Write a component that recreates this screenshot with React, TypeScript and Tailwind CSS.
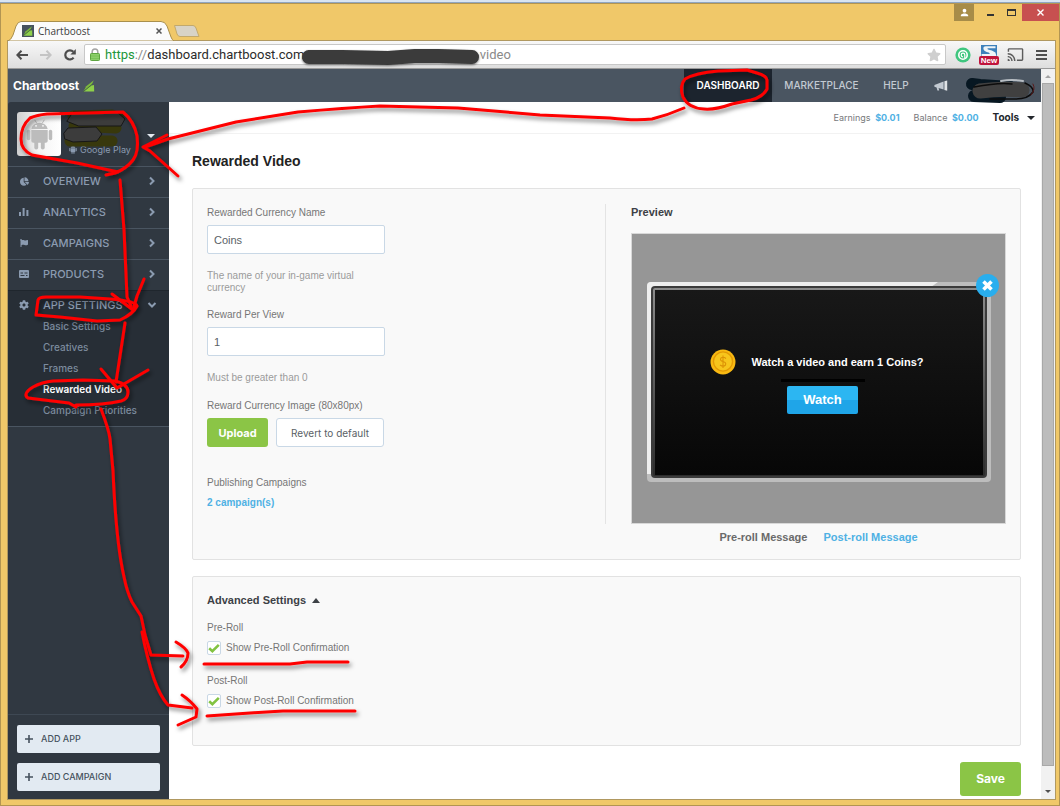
import { useState, type ReactNode } from "react";
import { FaChartPie, FaCog, FaFlag, FaStar } from "react-icons/fa";
import { MdCast, MdPerson } from "react-icons/md";

const brand = "font-['Inter',sans-serif]";

function LeafLogo({ className }: { className: string }) {
  return (
    <svg viewBox="0 0 12 12" className={className} aria-hidden="true">
      <path d="M0.4 11.6 L3.2 6.2 L10.8 0.2 L8.6 5.2 Z" fill="#7cb93e" />
      <path d="M0.4 11.6 L8.6 5.4 L11 5 L11.2 11.6 Z" fill="#8ed04a" />
      <path d="M0.4 11.6 L9.4 4" stroke="#3f5a3c" strokeWidth="0.8" />
    </svg>
  );
}

function AndroidIcon({ className }: { className: string }) {
  return (
    <svg viewBox="0 0 28 32" className={className} fill="currentColor" aria-hidden="true">
      <path d="M5.5 10.2 A8.6 7.6 0 0 1 22.5 10.2 Z" />
      <path d="M9 0.8 L11 4 M19 0.8 L17 4" stroke="currentColor" strokeWidth="1" />
      <circle cx="10.4" cy="7" r="0.9" fill="white" />
      <circle cx="17.6" cy="7" r="0.9" fill="white" />
      <path d="M5.5 11.4 H22.5 V22.5 Q22.5 24.5 20.5 24.5 H7.5 Q5.5 24.5 5.5 22.5 Z" />
      <rect x="0.8" y="11" width="3.6" height="11" rx="1.8" />
      <rect x="23.6" y="11" width="3.6" height="11" rx="1.8" />
      <rect x="8.6" y="22" width="4" height="9.5" rx="2" />
      <rect x="15.4" y="22" width="4" height="9.5" rx="2" />
    </svg>
  );
}

function MegaphoneIcon() {
  return (
    <svg viewBox="0 0 14 12" className="h-3 w-[14px]" aria-hidden="true">
      <path d="M9.6 1.6 V9.6 L4.6 8 L5.2 10.6 H3.4 L2.6 7.6 L0.4 6.8 V4.9 Z" fill="#c3cad2" />
      <path d="M10.4 1.2 L13.2 0.6 V10.8 L10.4 10 Z" fill="#e0e3e6" />
    </svg>
  );
}

function BarsIcon() {
  return (
    <svg viewBox="0 0 10 10" className="size-[10px]" fill="currentColor" aria-hidden="true">
      <path d="M0 5h2v4H0zM3.6 1h2v8h-2zM7.4 3h2v6h-2z" />
    </svg>
  );
}

function ProductIcon() {
  return (
    <svg viewBox="0 0 10 10" className="size-[10px]" aria-hidden="true">
      <rect x="0" y="1" width="10" height="8" rx="1" fill="currentColor" />
      <path d="M1.5 4h2.5M5.5 4h3M1.5 6.5h4M7 6.5h1.5" stroke="#303841" strokeWidth="1" />
    </svg>
  );
}

function Chevron({ down }: { down?: boolean }) {
  return (
    <svg viewBox="0 0 10 10" className="size-[10px]" fill="none" stroke="currentColor" strokeWidth="2" aria-hidden="true">
      <path d={down ? "M1.5 3 L5 6.5 L8.5 3" : "M3 1.5 L6.5 5 L3 8.5"} />
    </svg>
  );
}

function TitleBar() {
  return (
    <div className="flex h-[37px] items-end justify-between pl-[7px]">
      <div className="flex h-full items-end">
        <div className="relative flex h-5 w-[166px] items-center pl-[14px] pr-[10px]">
          <svg viewBox="0 0 166 20" className="absolute inset-0 h-full w-full" preserveAspectRatio="none" aria-hidden="true">
            <path d="M0 20 Q3 19 5 14 L8 5 Q10 0.5 13 0.5 H153 Q157 0.5 159 5 L163 16 Q164 19 166 20 Z" fill="#fbfbfb" stroke="#a98f4c" />
          </svg>
          <span className="relative flex size-3 items-center justify-center bg-[#46525e]">
            <LeafLogo className="size-[10px]" />
          </span>
          <span className="relative ml-1 flex-1 font-['Open_Sans',sans-serif] text-[10px] text-[#3c3c3c]">Chartboost</span>
          <button aria-label="Close tab" className="relative flex size-[10px] items-center justify-center">
            <svg viewBox="0 0 6 6" className="size-[6px]" stroke="#555" strokeWidth="1.5" aria-hidden="true">
              <path d="M0.5 0.5 L5.5 5.5 M5.5 0.5 L0.5 5.5" />
            </svg>
          </button>
        </div>
        <button aria-label="New tab" className="mb-1">
          <svg viewBox="0 0 26 12" className="h-3 w-[26px]" aria-hidden="true">
            <path d="M0.5 0.5 H19 Q21 0.5 22 3 L25 11.5 H6 Q4 11.5 3 9 Z" fill="#d8d3c6" stroke="#c2a96c" />
          </svg>
        </button>
      </div>
      <div className="flex h-full items-start">
        <button aria-label="Profile" className="flex h-[17px] w-5 items-center justify-center bg-[#a78c48] text-white">
          <MdPerson size={11} />
        </button>
        <button aria-label="Minimize" className="flex h-[17px] w-8 items-center justify-center pt-[5px]">
          <span className="h-[2px] w-[7px] bg-[#333]" />
        </button>
        <button aria-label="Maximize" className="mr-[6px] flex h-[17px] w-[10px] items-center justify-center">
          <span className="h-[7px] w-[9px] border border-t-2 border-[#333]" />
        </button>
        <button aria-label="Close window" className="flex h-[17px] w-[37px] items-center justify-center bg-[#c75050]">
          <svg viewBox="0 0 7 7" className="size-[7px]" stroke="white" strokeWidth="1.4" aria-hidden="true">
            <path d="M0.5 0.5 L6.5 6.5 M6.5 0.5 L0.5 6.5" />
          </svg>
        </button>
      </div>
    </div>
  );
}

function Toolbar() {
  return (
    <div className="flex h-7 items-center gap-2 border-b border-[#9a9a9a] bg-linear-to-b from-[#f8f8f8] to-[#dedede] px-2">
      <button aria-label="Back">
        <svg viewBox="0 0 12 10" className="h-[10px] w-3" fill="none" stroke="#4d4d4d" strokeWidth="2" aria-hidden="true">
          <path d="M12 5 H1.5 M5.5 0.8 L1.3 5 L5.5 9.2" />
        </svg>
      </button>
      <button aria-label="Forward" className="ml-[4px]">
        <svg viewBox="0 0 12 10" className="h-[10px] w-3" fill="none" stroke="#c4c4c4" strokeWidth="2" aria-hidden="true">
          <path d="M0 5 H10.5 M6.5 0.8 L10.7 5 L6.5 9.2" />
        </svg>
      </button>
      <button aria-label="Reload" className="ml-[4px]">
        <svg viewBox="0 0 12 12" className="size-3" fill="none" stroke="#4d4d4d" strokeWidth="2.2" aria-hidden="true">
          <path d="M9.6 8.6 A4.6 4.6 0 1 1 9.3 2.8" />
          <path d="M11.8 0 V5.4 H6.4 Z" fill="#4d4d4d" stroke="none" />
        </svg>
      </button>
      <div className="flex h-[21px] flex-1 items-center rounded-[2px] border border-[#c8c8c8] bg-white pl-[5px] pr-1">
        <svg viewBox="0 0 10 13" className="h-[13px] w-[10px]" aria-hidden="true">
          <path d="M2.2 6 V3.8 A2.8 2.8 0 0 1 7.8 3.8 V6" fill="none" stroke="#a3a3a3" strokeWidth="1.5" />
          <rect x="0.5" y="5.5" width="9" height="7" rx="0.8" fill="#8ccf6a" stroke="#5ea540" />
          <path d="M1 8h8M1 10.5h8" stroke="#6fb84d" strokeWidth="0.6" />
        </svg>
        <span className="ml-[5px] flex flex-1 items-center whitespace-nowrap font-['Roboto',sans-serif] text-[13px] leading-5 text-[#2b2b2b]">
          <span className="text-[#22973c]">https</span>
          <span className="text-[#8a8a8a]">://</span>
          <span>dashboard.chartboost.com/</span>
          <span className="ml-[170px] text-[#8a8a8a]">video</span>
        </span>
        <FaStar className="size-[14px] text-[#cfcfcf]" />
      </div>
      <svg viewBox="0 0 16 16" className="ml-px size-4" fill="none" aria-hidden="true">
        <circle cx="8" cy="8" r="7.6" fill="#3fc67f" />
        <path d="M11 11 Q9.6 12.2 8 12.2 A4.2 4.2 0 1 1 12.2 8 Q12.2 10 11 11" stroke="white" strokeWidth="1.6" />
        <path d="M8 9.8 A1.8 1.8 0 1 1 9.8 8 V11" stroke="white" strokeWidth="1.2" />
      </svg>
      <span className="flex w-5 flex-col items-center">
        <svg viewBox="0 0 16 11" className="h-[11px] w-4" aria-hidden="true">
          <rect width="16" height="11" fill="#3d80bb" />
          <path d="M2.6 4.6 Q1.6 1.2 5 1.2 H14.5 V3.2 H7 Q5.6 3.6 7 4.6 Q11 5 14.4 7.6 L15.4 11 H0.6 V9 H8.4 Q9.4 8.2 7.6 7.4 Q3.4 6.8 2.6 4.6 Z" fill="#eef4f8" />
        </svg>
        <span className="flex h-[9px] w-5 items-center justify-center rounded-[2px] bg-[#c0143c] text-[8px] font-bold leading-[9px] text-white">New</span>
      </span>
      <MdCast className="size-[17px] text-[#5c5c5c]" />
      <button aria-label="Menu" className="ml-1 flex w-[11px] flex-col gap-[2px]">
        <span className="h-[2px] bg-[#4f4f4f]" />
        <span className="h-[2px] bg-[#4f4f4f]" />
        <span className="h-[2px] bg-[#4f4f4f]" />
      </button>
    </div>
  );
}

function SiteHeader() {
  return (
    <header className={`${brand} flex h-[33px] items-stretch justify-between bg-[#4a5561] pl-[5px] text-[10px] font-medium text-[#c3cad2]`}>
      <a href="#home" className="flex items-center gap-1 text-[12px] font-bold text-white">
        Chartboost
        <LeafLogo className="size-3" />
      </a>
      <nav className="flex items-stretch">
        <a href="#dashboard" className="flex w-[88px] items-center justify-center bg-[#1c242e] font-semibold text-white">DASHBOARD</a>
        <a href="#marketplace" className="flex w-[99px] items-center justify-center">MARKETPLACE</a>
        <a href="#help" className="flex w-[50px] items-center justify-center">HELP</a>
        <a href="#news" aria-label="News" className="flex w-10 items-center justify-center">
          <MegaphoneIcon />
        </a>
        <span className="w-20" />
      </nav>
    </header>
  );
}

function NavRow({ icon, label, open }: { icon: ReactNode; label: string; open?: boolean }) {
  return (
    <a href={`#${label.toLowerCase().replace(" ", "-")}`} className="flex h-[30px] items-center pb-[2px] pl-[11px] pr-3 text-[11px] font-medium text-[#8b9bb0]">
      <span className="flex w-[10px] justify-center">{icon}</span>
      <span className="ml-[14px] flex-1">{label}</span>
      <Chevron down={open} />
    </a>
  );
}

function Sidebar() {
  const subItems = ["Basic Settings", "Creatives", "Frames", "Rewarded Video", "Campaign Priorities"];
  return (
    <aside className={`${brand} flex w-[161px] shrink-0 flex-col rounded-tl-[3px] bg-[#303841]`}>
      <div className="flex h-16 items-center pb-1 pl-[9px] pr-[14px]">
        <span className="mt-[4px] flex size-11 items-center justify-center rounded-[3px] bg-linear-to-r from-[#d0d0d0] via-[#f4f4f4] to-white text-[#bcbcbc]">
          <AndroidIcon className="h-[31px] w-[27px]" />
        </span>
        <span className="ml-2 mt-[35px] flex flex-1 items-center gap-[3px] whitespace-nowrap text-[9px] text-[#8b9bb0]">
          <AndroidIcon className="h-[9px] w-2" />
          Google Play
        </span>
        <span className="mt-2 border-x-4 border-t-4 border-x-transparent border-t-[#e2e8ef]" />
      </div>
      <nav className="flex flex-col">
        <div className="border-t border-[#4a5561]"><NavRow icon={<FaChartPie size={9} />} label="OVERVIEW" /></div>
        <div className="border-t border-[#4a5561]"><NavRow icon={<BarsIcon />} label="ANALYTICS" /></div>
        <div className="border-t border-[#4a5561]"><NavRow icon={<FaFlag size={8} />} label="CAMPAIGNS" /></div>
        <div className="border-t border-[#4a5561]"><NavRow icon={<ProductIcon />} label="PRODUCTS" /></div>
        <div className="border-y border-b-[#4a5561] border-t-[#1f262d] bg-[#272e36] pb-[5px]">
          <NavRow icon={<FaCog size={10} />} label="APP SETTINGS" open />
          <ul className="-mt-[5px]">
            {subItems.map((item) => (
              <li key={item} className="flex h-[21px] items-center whitespace-nowrap pl-[35px] text-[10px]">
                <a
                  href={`#${item.toLowerCase().replace(" ", "-")}`}
                  className={item === "Rewarded Video" ? "font-semibold text-white" : "font-medium text-[#7c8b9e]"}
                >
                  {item}
                </a>
              </li>
            ))}
          </ul>
        </div>
      </nav>
      <div className="mt-auto flex flex-col gap-[10px] border-t border-[#3e4853] px-[9px] pb-2 pt-[10px]">
        {["ADD APP", "ADD CAMPAIGN"].map((label) => (
          <button key={label} className="flex h-7 items-center gap-2 rounded-[2px] bg-[#e2eaf2] pl-2 text-[9px] font-medium text-[#46525e]">
            <svg viewBox="0 0 8 8" className="size-2" stroke="currentColor" strokeWidth="1.6" aria-hidden="true">
              <path d="M4 0 V8 M0 4 H8" />
            </svg>
            {label}
          </button>
        ))}
      </div>
    </aside>
  );
}

function PreviewPanel({ currency, amount }: { currency: string; amount: string }) {
  return (
    <section className="w-[375px] shrink-0">
      <h2 className="mt-[2px] text-[11px] font-bold leading-3 text-[#3d4146]">Preview</h2>
      <div className="mt-[15px] border border-[#d8d8d8] bg-[#969696] pb-10 pl-[15px] pr-[14px] pt-12">
        <div className="relative h-[201px]">
          <svg viewBox="0 0 344 201" className="absolute inset-0 h-full w-full" preserveAspectRatio="none" aria-hidden="true">
            <defs>
              <linearGradient id="screen" x1="0" y1="0" x2="0" y2="1">
                <stop offset="0" stopColor="#181818" />
                <stop offset="1" stopColor="#070707" />
              </linearGradient>
              <linearGradient id="bezel" x1="0" y1="0" x2="0" y2="1">
                <stop offset="0" stopColor="#8c8c8c" />
                <stop offset="1" stopColor="#2c2c2c" />
              </linearGradient>
            </defs>
            <rect width="344" height="200" rx="4" fill="#bdbdbd" />
            <path d="M4 0 H291 L284 5 L5 192 L0 192 V4 Q0 0 4 0 Z" fill="#eeeeee" />
            <rect x="4" y="4" width="336" height="192" rx="4" fill="#3b3b3b" />
            <rect x="6" y="6" width="332" height="188" rx="2" fill="url(#bezel)" />
            <rect x="8" y="8" width="328" height="185" fill="url(#screen)" />
          </svg>
          <div className="relative flex h-full flex-col items-center pl-[7px] pt-[67px]">
            <div className="flex items-center gap-4 pr-3">
              <svg viewBox="0 0 26 26" className="size-[26px]" aria-hidden="true">
                <circle cx="13" cy="13" r="12.5" fill="#f9b912" />
                <circle cx="13" cy="12.5" r="9.6" fill="#f7c51c" stroke="#e39a05" strokeWidth="1.4" />
                <path d="M13 6.5 V19 M16 9.5 Q13 7.2 10.8 9.2 Q9.6 11.6 13 12.5 Q16.6 13.6 15.5 16 Q13.4 18.2 10 16" fill="none" stroke="#dc9206" strokeWidth="1.1" />
              </svg>
              <p className="whitespace-nowrap text-[11px] font-bold text-white">
                Watch a video and earn {amount} {currency}?
              </p>
            </div>
            <span className="mt-1 h-[3px] w-[84px] bg-black" />
            <button className="mt-1 h-7 w-[71px] rounded-[2px] bg-[linear-gradient(#2cb6f2_50%,#1fa5e8_50%)] text-[13px] font-bold text-white">Watch</button>
          </div>
          <button aria-label="Close preview" className="absolute -right-2 -top-2 size-[23px]">
            <svg viewBox="0 0 23 23" className="size-[23px]" aria-hidden="true">
              <circle cx="11.5" cy="11.5" r="11.5" fill="#29aeee" />
              <path d="M7.5 7.5 L15.5 15.5 M15.5 7.5 L7.5 15.5" stroke="white" strokeWidth="3.6" />
            </svg>
          </button>
        </div>
      </div>
      <div className="mt-[7px] flex justify-center gap-4 text-[11px] font-bold leading-3">
        <button className="text-[#6a6a6a]">Pre-roll Message</button>
        <button className="text-[#4fb1e4]">Post-roll Message</button>
      </div>
    </section>
  );
}

const inputStyle = "mt-[6px] block h-[29px] w-[178px] rounded-[2px] border border-[#c9d8e6] bg-white px-[6px] text-[11px] text-[#5a5f66]";

function CheckRow({ id, title, label }: { id: string; title: string; label: string }) {
  return (
    <div>
      <div className="text-[10px] leading-3 text-[#767676]">{title}</div>
      <label htmlFor={id} className="mt-[7px] flex items-center gap-[5px] text-[10px] leading-[14px] text-[#767676]">
        <span className="relative size-[14px]">
          <input id={id} type="checkbox" defaultChecked className="peer block size-[14px] appearance-none rounded-[2px] border border-[#c9d8e6] bg-white" />
          <svg viewBox="0 0 14 14" className="pointer-events-none invisible absolute inset-0 size-[14px] peer-checked:visible" fill="none" stroke="#82c341" strokeWidth="2.6" aria-hidden="true">
            <path d="M2.2 7.2 L5.4 10.2 L11.8 3.8" />
          </svg>
        </span>
        {label}
      </label>
    </div>
  );
}

function Annotations() {
  return (
    <svg viewBox="0 0 1060 806" className="pointer-events-none absolute left-0 top-0 h-[806px] w-[1060px]" fill="none" aria-hidden="true">
      <defs>
        <filter id="ink" filterUnits="userSpaceOnUse" x="0" y="0" width="1060" height="806">
          <feDropShadow dx="2" dy="3" stdDeviation="2" floodColor="#000" floodOpacity="0.5" />
        </filter>
        <filter id="soft" filterUnits="userSpaceOnUse" x="0" y="0" width="1060" height="806">
          <feDropShadow dx="0" dy="1" stdDeviation="1" floodColor="#000" floodOpacity="0.5" />
        </filter>
      </defs>
      <g strokeLinecap="round" strokeLinejoin="round">
        <path d="M309 55 H342 L388 56 L415 54 H438 L472 55" stroke="#3a3a3a" strokeWidth="14" filter="url(#soft)" />
        <path d="M73 114 L112 113 L119 116 M74 124 L116 126 M70 139 H112" stroke="#38380c" strokeWidth="11" />
        <path d="M67 119 L73 110 L117 110 L125 117 L121 124 L79 124 Z M64 131 L68 126 L96 125 L102 132 L97 139 L73 140 L65 137 Z" stroke="#171717" strokeWidth="1" fill="#3c3c3c" />
        <path d="M972 82 L980 83 L1010 85 M974 94 L1000 95" stroke="#071722" strokeWidth="12" />
        <path d="M980 89 Q1002 86 1022 88" stroke="#404040" strokeWidth="15" />
        <path d="M1001 79 Q1012 77 1023 79" stroke="#b7bdc3" strokeWidth="2" />
        <path d="M974 85 Q1000 80 1012 82 M1025 81 Q1034 85 1033 90 Q1028 97 1016 97 L990 97" stroke="#0c0c0c" strokeWidth="1.5" />
        <path d="M1033 82 Q1036 87 1031 93" stroke="#5b1b1b" strokeWidth="1" />
      </g>
      <g stroke="#fe0000" strokeWidth="3" strokeLinecap="round" strokeLinejoin="round" filter="url(#ink)">
        <path d="M683 95 Q679 84 685 77 Q695 71 718 69 L747 68 L757 71 Q767 74 767 78 L767 87 Q763 95 751 98 L732 102 Q715 108 704 107 Q688 106 683 95 Z" />
        <path d="M684 106 Q668 113 652 117 Q635 119 610 116 L540 113 L458 106 L380 104 Q345 106 298 110 L236 120 L168 137 L145 145" />
        <path d="M167 133 L143 145 L150 149 L178 174" />
        <path d="M47 112 L123 110 Q134 119 137 134 Q139 150 133 158 Q126 167 115 171 L106 173 L118 170 L77 161 L32 153 Q21 148 21 137 Q21 124 30 116 Q37 113 47 112 Z" />
        <path d="M120 178 L124 228 L127 295 L131 304" />
        <path d="M112 292 L133 308 L137 294 L144 277" />
        <path d="M36 313 L38 298 Q39 295 46 295 L80 295 L110 297 Q136 299 137 304 Q133 312 120 318 L97 319 L60 315 Z" />
        <path d="M125 321 L116 380" />
        <path d="M101 367 L117 386 L148 368" />
        <path d="M76 405 L69 401 L28 396 Q22 392 33 385 Q42 380 53 379 L83 378 L115 379 Q128 382 128 390 Q128 397 121 399 Q104 403 76 403 Z" />
        <path d="M101 407 Q109 428 110 437 L113 469 Q116 540 124 575 Q127 590 132 600 L141 614 L145 633 L151 653 L183 654" />
        <path d="M176 640 Q186 646 188 651 Q188 659 181 665" />
        <path d="M142 630 Q147 656 154 677 Q160 694 168 703 L192 706" />
        <path d="M182 693 Q191 699 197 707 L196 715 L178 723" />
        <path d="M204 662 H290 L307 660 H348" />
        <path d="M207 714 L250 711 L283 709 L355 709" />
      </g>
    </svg>
  );
}

export default function App() {
  const [currency, setCurrency] = useState("Coins");
  const [amount, setAmount] = useState("1");
  const [advancedOpen, setAdvancedOpen] = useState(true);

  return (
    <div className="relative flex min-h-screen flex-col border-t-2 border-[#d9e5f2] bg-[#8fa6c2] pt-px font-['Liberation_Sans',Arial,sans-serif]">
      <div className="flex flex-1 flex-col border border-[#b29552] bg-[#f0c869]">
        <TitleBar />
        <div className="mx-[7px] mb-[6px] mr-[4px] flex flex-1 flex-col outline outline-[#b09860]">
          <Toolbar />
          <div className="flex flex-1">
            <div className="flex min-w-0 flex-1 flex-col bg-[#4a5561]">
              <SiteHeader />
              <div className="flex flex-1">
                <Sidebar />
                <main className="flex min-w-0 flex-1 flex-col bg-white">
                  <div className={`${brand} flex h-8 items-center justify-end gap-[14px] border-b border-[#f2f2f2] pr-[6px] text-[9px] text-[#77797c]`}>
                    <span>Earnings <b className="ml-[2px] font-bold text-[#4fb1e4]">$0.01</b></span>
                    <span>Balance <b className="ml-[2px] font-bold text-[#4fb1e4]">$0.00</b></span>
                    <button className="flex items-center gap-2 text-[10px] font-bold text-[#23272c]">
                      Tools
                      <span className="border-x-4 border-t-4 border-x-transparent border-t-[#23272c]" />
                    </button>
                  </div>
                  <div className="flex flex-1 flex-col pb-[3px] pl-[23px] pr-5">
                    <h1 className="mt-[18px] text-[14px] font-bold leading-[18px] text-[#222]">Rewarded Video</h1>
                    <div className="mt-[18px] flex h-[372px] gap-[25px] rounded-[2px] border border-[#e2e2e2] bg-[#f9f9f9] px-[14px] pt-[15px]">
                      <form className="h-80 min-w-0 flex-1 border-r border-[#e4e4e4] pt-[3px] text-[10px] leading-3 text-[#767676]">
                        <label htmlFor="currency" className="block">Rewarded Currency Name</label>
                        <input id="currency" className={inputStyle} value={currency} onChange={(e) => setCurrency(e.target.value)} />
                        <p className="mt-4 w-[178px] text-[#9b9b9b]">The name of your in-game virtual currency</p>
                        <label htmlFor="amount" className="mt-[15px] block">Reward Per View</label>
                        <input id="amount" className={inputStyle} value={amount} onChange={(e) => setAmount(e.target.value)} />
                        <p className="mt-4 text-[#9b9b9b]">Must be greater than 0</p>
                        <p className="mt-4">Reward Currency Image (80x80px)</p>
                        <div className={`${brand} mt-[6px] flex gap-2`}>
                          <button type="button" className="h-[29px] w-[61px] rounded-[3px] bg-[#8bc546] text-[11px] font-bold text-white">Upload</button>
                          <button type="button" className="h-[29px] w-[108px] whitespace-nowrap rounded-[3px] border border-[#c9d8e6] bg-white text-[10px] text-[#5a5f66]">Revert to default</button>
                        </div>
                        <p className="mt-[30px]">Publishing Campaigns</p>
                        <a href="#campaigns" className="mt-2 block font-bold text-[#4fb1e4]">2 campaign(s)</a>
                      </form>
                      <PreviewPanel currency={currency} amount={amount} />
                    </div>
                    <section className="mt-4 min-h-[170px] rounded-[2px] border border-[#e2e2e2] bg-[#f9f9f9] px-[14px] pt-[17px]">
                      <button
                        aria-expanded={advancedOpen}
                        onClick={() => setAdvancedOpen(!advancedOpen)}
                        className="flex items-center gap-[6px] text-[11px] font-bold leading-3 text-[#3d4146]"
                      >
                        Advanced Settings
                        <span className="border-x-4 border-b-[5px] border-x-transparent border-b-[#3d4146]" />
                      </button>
                      {advancedOpen && (
                        <div className="mt-4 flex flex-col gap-5">
                          <CheckRow id="pre" title="Pre-Roll" label="Show Pre-Roll Confirmation" />
                          <CheckRow id="post" title="Post-Roll" label="Show Post-Roll Confirmation" />
                        </div>
                      )}
                    </section>
                    <button className={`${brand} mt-4 h-[34px] w-[61px] self-end rounded-[3px] bg-[#8bc546] text-[12px] font-bold text-white`}>Save</button>
                  </div>
                </main>
              </div>
            </div>
            <div className="flex w-[14px] flex-col items-center bg-[#f1f1f1]">
              <span className="flex h-[14px] items-center">
                <span className="border-x-[3px] border-b-[3px] border-x-transparent border-b-[#a3a3a3]" />
              </span>
              <span className="w-3 flex-1 border border-[#a8a8a8] bg-[#bcbcbc]" />
              <span className="flex h-[33px] items-end pb-[6px]">
                <span className="border-x-[3px] border-t-[3px] border-x-transparent border-t-[#505050]" />
              </span>
            </div>
          </div>
        </div>
      </div>
      <Annotations />
    </div>
  );
}
